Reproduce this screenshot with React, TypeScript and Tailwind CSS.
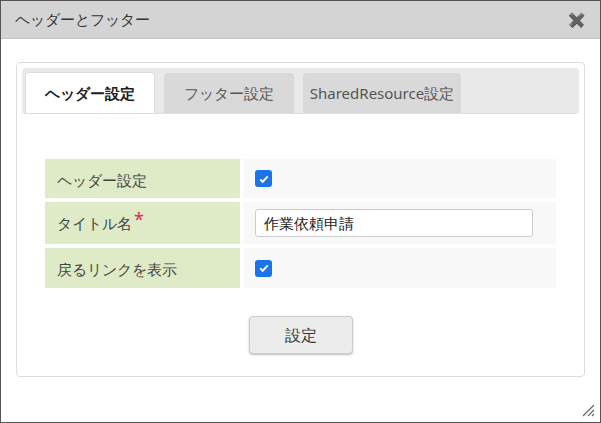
const font = "font-['Liberation_Sans','Noto_Sans_CJK_JP',sans-serif]"

const Check = () => (
	<span className="w-[17px] h-[17px] rounded-[3px] bg-[#1a73e8] flex items-center justify-center">
		<svg viewBox="0 0 16 16" className="w-3 h-3" fill="none" stroke="white" strokeWidth="2.6">
			<path d="M3 8.5l3.2 3.2L13 4.5" />
		</svg>
	</span>
)

const Row = ({ label, req, children, h }: { label: string; req?: boolean; children: React.ReactNode; h: string }) => (
	<div className={`flex gap-[3px] ${h}`}>
		<div className="w-[195px] bg-[#dfeac6] flex items-start pt-[10px] pl-3 text-[15px] text-[#444]">
			{label}
			{req && <span className="text-[#e0245e] text-lg leading-none ml-0.5 -mt-0.5">*</span>}
		</div>
		<div className="flex-1 bg-[#f8f8f8] flex items-center pl-3">{children}</div>
	</div>
)

export default function App() {
	return (
		<div className={`w-[601px] h-[423px] border border-[#555] bg-white flex flex-col relative ${font}`}>
			<div className="h-[38px] bg-[#d4d4d4] border-b border-[#c4c4c4] flex items-center justify-between px-3.5 shrink-0">
				<span className="text-[15px] text-[#333]">ヘッダーとフッター</span>
				<span className="text-[14px] font-bold text-[#222] leading-none">✖</span>
			</div>
			<div className="mx-[15px] mt-[23px] border border-[#ddd] rounded h-[315px] p-[5px]">
				<div className="h-[46px] bg-[#e9e9e9] rounded flex items-end gap-[9px] pl-[3px] border-b border-[#ddd]">
					<div className="w-[130px] h-[41px] bg-white rounded-t border border-b-0 border-[#ddd] flex items-center justify-center text-[15px] font-bold text-[#222]">ヘッダー設定</div>
					<div className="w-[130px] h-[40px] bg-[#d9d9d9] rounded-t flex items-center justify-center text-[15px] text-[#555]">フッター設定</div>
					<div className="w-[158px] h-[40px] bg-[#d9d9d9] rounded-t flex items-center justify-center text-[15px] text-[#555]">SharedResource設定</div>
				</div>
				<div className="mx-[23px] mt-[45px] flex flex-col gap-[4px]">
					<Row label="ヘッダー設定" h="h-[39px]"><Check /></Row>
					<Row label="タイトル名" req h="h-[42px]">
						<div className="w-[278px] h-[28px] bg-white border border-[#ccc] rounded-[3px] flex items-center px-2 text-[15px] text-[#222]">作業依頼申請</div>
					</Row>
					<Row label="戻るリンクを表示" h="h-[40px]"><Check /></Row>
				</div>
				<div className="flex justify-center mt-[28px]">
					<div className="w-[104px] h-[38px] bg-[#ececec] border border-[#ccc] rounded shadow-[0_1px_2px_rgba(0,0,0,0.25)] flex items-center justify-center text-[16px] text-[#333]">設定</div>
				</div>
			</div>
			<svg className="absolute right-[5px] bottom-[5px] w-3.5 h-3.5" viewBox="0 0 14 14" stroke="#666" strokeWidth="1.2">
				<path d="M13 2L2 13M13 7L7 13M13 11L11 13" />
			</svg>
		</div>
	)
}
